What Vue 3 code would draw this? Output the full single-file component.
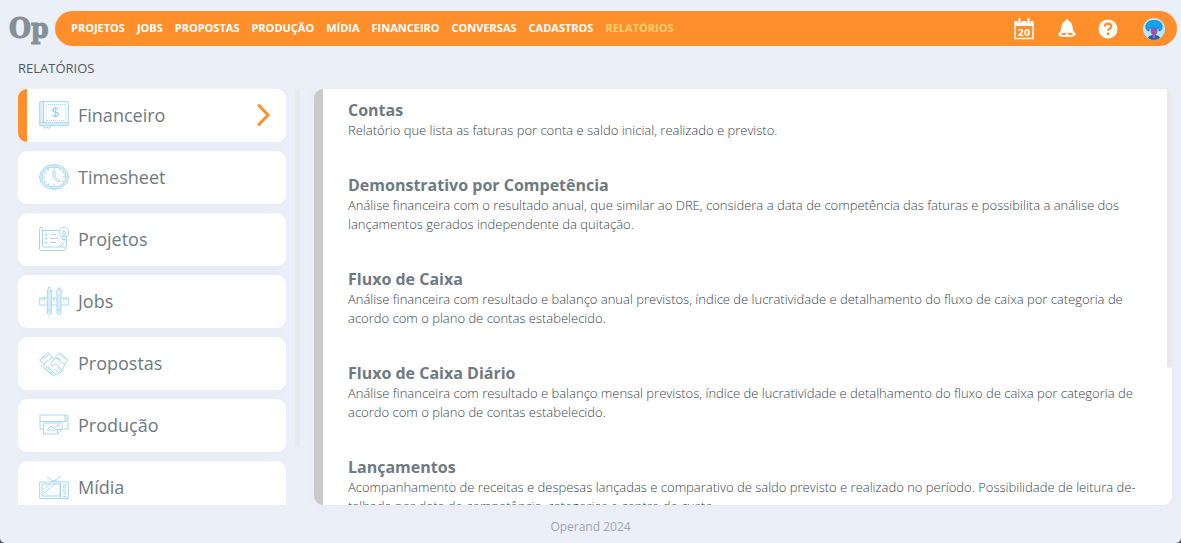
<script setup>
const nav = ['Projetos', 'Jobs', 'Propostas', 'Produção', 'Mídia', 'Financeiro', 'Conversas', 'Cadastros', 'Relatórios']
const categories = [
  { name: 'Financeiro', icon: 'book' },
  { name: 'Timesheet', icon: 'clock' },
  { name: 'Projetos', icon: 'plan' },
  { name: 'Jobs', icon: 'tools' },
  { name: 'Propostas', icon: 'hands' },
  { name: 'Produção', icon: 'plotter' },
  { name: 'Mídia', icon: 'tv' }
]
const reports = [
  { title: 'Contas', text: 'Relatório que lista as faturas por conta e saldo inicial, realizado e previsto.' },
  { title: 'Demonstrativo por Competência', text: 'Análise financeira com o resultado anual, que similar ao DRE, considera a data de competência das faturas e possibilita a análise dos lançamentos gerados independente da quitação.' },
  { title: 'Fluxo de Caixa', text: 'Análise financeira com resultado e balanço anual previstos, índice de lucratividade e detalhamento do fluxo de caixa por categoria de acordo com o plano de contas estabelecido.' },
  { title: 'Fluxo de Caixa Diário', text: 'Análise financeira com resultado e balanço mensal previstos, índice de lucratividade e detalhamento do fluxo de caixa por categoria de acordo com o plano de contas estabelecido.' },
  { title: 'Lançamentos', text: 'Acompanhamento de receitas e despesas lançadas e comparativo de saldo previsto e realizado no período. Possibilidade de leitura de\u00ADtalhada por data de competência, categorias e centro de custo.' }
]
</script>

<template>
  <div class="page">
    <header class="top">
      <a class="logo" href="#" aria-label="Operand">Op</a>
      <div class="bar">
        <nav class="menu">
          <a v-for="(item, i) in nav" :key="item" href="#" :class="{ current: i === 8 }">{{ item }}</a>
        </nav>
        <div class="actions">
          <button class="action agenda" aria-label="Agenda">
            <svg width="20" height="22" viewBox="0 0 20 22">
              <path d="M1 4h18v16.500H1z" fill="none" stroke="#fff" stroke-width="1.500" />
              <path d="M1 3h18v5H1z" fill="#fff" />
              <path d="M5.500 1v4M14.500 1v4" stroke="#ff8f2b" stroke-width="4" />
              <path d="M5.500 0v5M14.500 0v5" stroke="#fff" stroke-width="2" />
              <text x="10" y="18" text-anchor="middle" class="day">20</text>
            </svg>
          </button>
          <button class="action" aria-label="Notificações">
            <svg width="18" height="20" viewBox="0 0 18 20">
              <path d="M9 0c1 0 1.500 1 1.600 2 2.500.7 3.700 3 3.900 6 .2 3 1 5 3 6.500 1 1.600-1 3.500-8.500 3.500S-.5 16.100.5 14.500c2-1.500 2.800-3.500 3-6.500.2-3 1.400-5.300 3.900-6C7.500 1 8 0 9 0z" fill="#fff" />
              <ellipse cx="9" cy="15" rx="6" ry="1.300" fill="#ff8f2b" /><circle cx="9" cy="15.600" r="1.500" fill="#fff" />
            </svg>
          </button>
          <button class="action" aria-label="Ajuda">
            <svg width="20" height="20" viewBox="0 0 20 20">
              <circle cx="10" cy="10" r="9.500" fill="#fff" />
              <path d="M6.800 7.600C7 5.500 8.300 4.700 10 4.700c2 0 3.300 1 3.300 2.700 0 2-3.100 2.200-3.100 4.400" fill="none" stroke="#ff8f2b" stroke-width="2.300" />
              <circle cx="10.100" cy="14.800" r="1.500" fill="#ff8f2b" />
            </svg>
          </button>
          <button class="action avatar" aria-label="Perfil">
            <svg width="22" height="22" viewBox="0 0 22 22">
              <circle cx="11" cy="11" r="11" fill="#b9e8fb" />
              <path d="M5 20c1-3 3-2 4-3h4c1 1 3 0 4 3a11 11 0 0 1-12 0z" fill="#16679f" />
              <path d="M7.500 8h7v5c0 2-1 3-2 4v2l-1.500 3-1.500-3v-2c-1-1-2-2-2-4z" fill="#a957b5" />
              <path d="M3 10C2 6 5 2.500 11 2.500s9 3.500 8 7.500c0 2-2 3-3 3 0-2-1-3-2-3-2 .5-4 .5-6 0-1 0-2 1-2 3-1 0-3-1-3-3z" fill="#12a3ec" stroke="#1673b9" stroke-width=".7" />
              <path d="M9 12h1M12 12h1M10 15h2" stroke="#513379" stroke-width=".7" />
            </svg>
          </button>
        </div>
      </div>
    </header>

    <h1>Relatórios</h1>

    <main class="content">
      <div class="side">
        <ul class="categories">
          <li v-for="(c, i) in categories" :key="c.name">
            <button class="category" :class="{ active: i === 0 }">
              <svg class="icon" width="30" height="30" viewBox="0 0 30 30">
                <g v-if="c.icon === 'book'">
                  <path class="tint" d="M1 2h4v22H1zM1 23h28v3H1z" />
                  <path d="M.7 1.700h28.600v24H.7zM4.500 2v20.500M.7 22.700h28.600M5 26v2h2l1-1 1 1h2v-2" />
                  <path class="dots" d="M7 4.500h20v16H7z" />
                  <path d="M19 9.200c-1-1.200-5-1.700-5 1 0 2.800 5.500 1.300 5.500 4 0 2.600-5 2.400-6 .8M16.500 6.500v11" stroke-width="1.500" />
                </g>
                <g v-else-if="c.icon === 'clock'">
                  <ellipse class="ring" cx="15" cy="15" rx="13.400" ry="11.300" />
                  <ellipse cx="15" cy="15" rx="14.400" ry="12.300" /><ellipse cx="15" cy="15" rx="12" ry="10" />
                  <path d="M15 5v3M15 22v3M3 15h3M24 15h3M9 6.500l1 2M21 6.500l-1 2M5 10l2 1M25 10l-2 1M5 20l2-1M9 23.500l1-2M25 20l-2-1M14 9h2v6l5 4-1 1-6-4z" />
                </g>
                <g v-else-if="c.icon === 'plan'">
                  <path d="M3.500 22V4.500c0-1.500-3-1.500-3 0V24c0 2 1 2.500 2.500 2.500h22c2 0 2-3 1-3.500H3.500M4 6.500h15M27.500 15v8M6 10h2v1H6zM6 14h2v1H6zM6 18h2v1H6zM11 10.500h2m1 0h3M11 14.500h5m1 0h2M11 18.500h6M20 21l1.500 1.500L25 19" />
                  <circle cx="25" cy="8" r="4.800" /><path d="M23 12.500v3h4v-3M23.500 9l1.500-2 1.500 2L25 12zM24 17h2" />
                </g>
                <g v-else-if="c.icon === 'tools'">
                  <path class="tint" d="M8.500 5h4v22h-4zM18 10h4v17h-4z" />
                  <path d="M8 12H.7v7H8M13 12h4.500M13 19h4.500M22.500 12h6.800v7h-6.800M8.300 5l2-4.500 2 4.500v22c0 2-4 2-4 0zM8.300 24h4M8.300 5h4M18 9l-1-3 3-4.500L23 6l-1 3v18c0 2-4 2-4 0zM18 9h4M18 24h4M20 2v5M3 12v3M5.500 12v2M15 12v3M25 12v3M27.500 12v2" />
                </g>
                <g v-else-if="c.icon === 'hands'">
                  <path d="M.7 12L9 4.800l4.500 4L5 16zM29.300 12L21 4.800l-4.500 4L25 16zM5.500 15l-1 5 9 7c1.500 1.200 3 .5 3-1 1.500 1 3 0 3-1.500 1.500.8 3-.2 2.800-1.500 1.700.2 2.500-1.400 1.700-2.500l2-5M23 22l-6-6-2 1c-2 1.500-4 .5-3-1.500l3.500-4.500c1-1 2-1 3-.5l3 1M12 9.500l4 1M6 21l2-2c1-1 2.500.3 1.500 1.500L8 22.500M8.500 23l2-2c1-1 2.500.3 1.500 1.500l-2 2M11 25.500l1.500-1.500c1-1 2.500.3 1.500 1.500l-1.500 1.500M16.500 26L14 24M19.500 24.500L16 21.500M22 23l-4-3.500M3 11.500l7-5M27 11.500l-7-5" />
                </g>
                <g v-else-if="c.icon === 'plotter'">
                  <path class="tint" d="M26 5h3v6h-3z" />
                  <path d="M1 5h26c3 0 3 6.500 0 6.500H1zM26 5v6M1 11.500V19h4M25 19h4v-7.500M4.500 13h19M4.500 13.500V24h14l4.500-4.500v-6M18.500 24v-4.500H23M8 20l4-4 2 2 1.500-1 3 3z" /><circle cx="19" cy="15.500" r="1" />
                </g>
                <g v-else>
                  <path d="M.7 10h28.600v16.500H.7zM3 12h18v12H3zM21.500 10v16M8 4.500l6 5 8-5M12 10c1-2 6-2 7 0M4 18l7-6M4 22l12-10M24 22h3M24 24.500h3" /><circle cx="25.500" cy="14" r="1.500" /><circle cx="25.500" cy="18.500" r="1.500" />
                </g>
              </svg>
              <span>{{ c.name }}</span>
              <svg v-if="i === 0" class="chevron" width="14" height="24" viewBox="0 0 14 24"><path d="M3 2.500L12 12 3 21.500" /></svg>
            </button>
          </li>
        </ul>
        <div class="track"><div class="thumb"></div></div>
      </div>

      <section class="panel">
        <div class="reports">
          <article v-for="r in reports" :key="r.title">
            <h2>{{ r.title }}</h2>
            <p>{{ r.text }}</p>
          </article>
        </div>
        <div class="track"><div class="thumb long"></div></div>
      </section>
    </main>

    <footer>Operand 2024</footer>
  </div>
</template>

<style>
body { background: #4c4f55; }
</style>

<style scoped>
* { box-sizing: border-box; }
.page { height: 100vh; display: flex; flex-direction: column; overflow: hidden; border-radius: 0 0 5px 5px; background: #ebeff8; color: #6d7a82; font-family: "Open Sans", "Noto Sans", sans-serif; }
a { color: inherit; text-decoration: none; }
button { border: 0; padding: 0; background: none; color: inherit; font: inherit; cursor: pointer; }
.top { flex: none; display: flex; align-items: center; padding: 11px 4px 0 9px; }
.logo { flex: none; width: 46px; font: 700 28px/34px "DejaVu Serif Condensed", "Liberation Serif", serif; color: #858f94; -webkit-text-stroke: 1px #858f94; }
.bar { flex: 1; height: 35px; display: flex; align-items: center; justify-content: space-between; padding: 0 12px 0 16px; border-radius: 18px; background: #ff8f2b; }
.menu { display: flex; gap: 12px; padding-bottom: 2px; font-size: 11px; line-height: 16px; font-weight: 700; color: #fff; text-transform: uppercase; }
.current { color: #ffcf70; }
.actions { display: flex; align-items: center; gap: 22px; }
.action { display: flex; }
.agenda { margin-right: 2px; }
.avatar { margin-left: 3px; }
.day { font: 700 9px "DejaVu Sans", sans-serif; fill: #fff; }
h1 { flex: none; margin: 13px 18px 12px; font-size: 13px; line-height: 18px; font-weight: 400; color: #54595f; text-transform: uppercase; }
.content { flex: 1; min-height: 0; display: flex; gap: 14px; padding: 0 9px 0 18px; }
.side { flex: none; width: 282px; display: flex; justify-content: space-between; }
.categories { width: 268px; margin: 0; padding: 0; list-style: none; overflow: hidden; }
.categories li { margin-bottom: 9px; }
.category { width: 100%; height: 53px; display: flex; align-items: center; padding: 0 16px 2px 21px; border-radius: 9px; background: #fff; box-shadow: 0 0 8px #e3e9f4; font-size: 18px; line-height: 26px; }
.category.active { border-left: 9px solid #ff8f2b; padding-left: 12px; }
.icon { flex: none; margin-right: 9px; fill: none; stroke: #a5d8f0; stroke-width: 1; }
.tint { fill: #d9f0fb; stroke: none; }
.dots { stroke-dasharray: 1 1; }
.ring { stroke: #d3effb; stroke-width: 2; }
.chevron { margin-left: auto; fill: none; stroke: #ff8f2b; stroke-width: 3; stroke-linecap: round; }
.track { flex: none; width: 5px; }
.thumb { height: 86%; background: #e8e9eb; border-radius: 0 0 3px 3px; }
.thumb.long { height: 67%; }
.panel { flex: 1; min-width: 0; display: flex; overflow: hidden; background: #fff; border-left: 9px solid #c8c9c9; border-radius: 9px; box-shadow: 0 0 8px #e3e9f4; }
.reports { flex: 1; min-width: 0; padding: 10px 25px 0; overflow: hidden; }
article { margin-bottom: 34px; }
h2 { margin: 0; font-size: 16px; line-height: 22px; font-weight: 700; }
p { margin: 0; font-size: 13px; line-height: 19px; font-weight: 300; color: #39464e; }
footer { flex: none; padding: 12px 0 7px; font-size: 12px; line-height: 19px; text-align: center; color: #a0a6b4; }
</style>
